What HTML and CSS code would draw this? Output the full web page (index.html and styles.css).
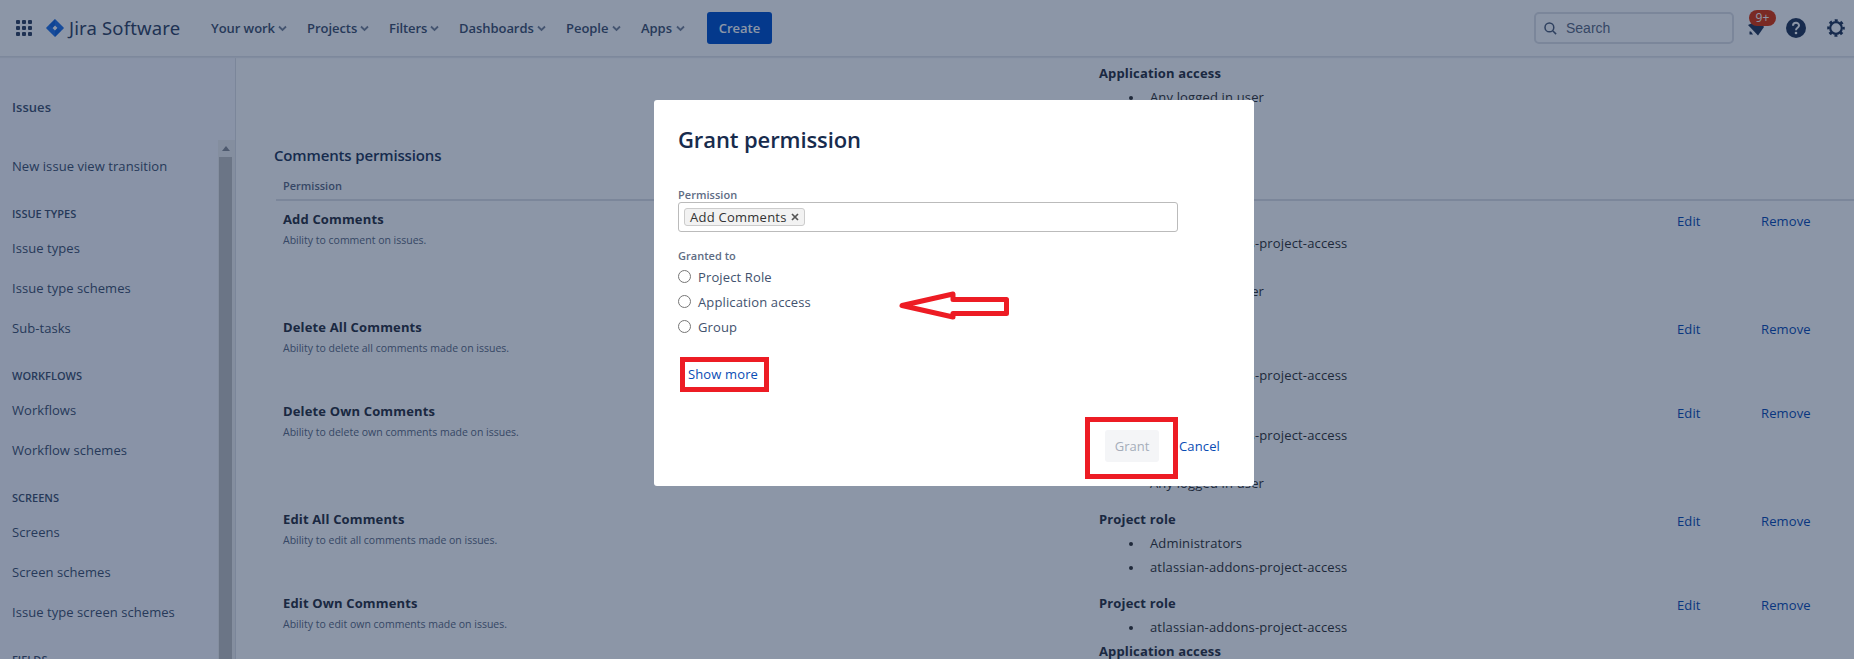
FILE: index.html
```html
<!DOCTYPE html>
<html lang="en">
<head>
    <meta charset="UTF-8">
    <meta name="viewport" content="width=device-width, initial-scale=1.0">
    <link rel="stylesheet" href="styles.css">
    <title>Grant permission - Jira</title>
</head>
<body>
    <header class="topbar">
        <svg class="switcher" width="16" height="16" viewBox="0 0 16 16">
            <g fill="#344563">
                <rect x="0" y="0" width="4" height="4" rx="1"/><rect x="6" y="0" width="4" height="4" rx="1"/><rect x="12" y="0" width="4" height="4" rx="1"/>
                <rect x="0" y="6" width="4" height="4" rx="1"/><rect x="6" y="6" width="4" height="4" rx="1"/><rect x="12" y="6" width="4" height="4" rx="1"/>
                <rect x="0" y="12" width="4" height="4" rx="1"/><rect x="6" y="12" width="4" height="4" rx="1"/><rect x="12" y="12" width="4" height="4" rx="1"/>
            </g>
        </svg>
        <div class="logo">
            <svg width="18" height="18" viewBox="0 0 18 18">
                <path fill="#2272e8" fill-rule="evenodd" d="M9 0l8.600 8.500q.5.5 0 1L9 18 .4 9.500q-.5-.5 0-1zM9 6.500L6.500 9 9 11.500 11.500 9z"/>
                <path fill="#0052cc" d="M9 0v6.500L6.500 9 3.200 6zM9 18v-6.500L11.500 9l3.300 3z" opacity=".4"/>
            </svg>
            <span class="logo-name">Jira Software</span>
        </div>
        <nav class="nav">
            <span class="nav-item n1">Your work<svg width="9" height="7" viewBox="0 0 9 7"><path d="M1 1.500l3.500 3.500L8 1.500"/></svg></span>
            <span class="nav-item n2">Projects<svg width="9" height="7" viewBox="0 0 9 7"><path d="M1 1.500l3.500 3.500L8 1.500"/></svg></span>
            <span class="nav-item n3">Filters<svg width="9" height="7" viewBox="0 0 9 7"><path d="M1 1.500l3.500 3.500L8 1.500"/></svg></span>
            <span class="nav-item n4">Dashboards<svg width="9" height="7" viewBox="0 0 9 7"><path d="M1 1.500l3.500 3.500L8 1.500"/></svg></span>
            <span class="nav-item n5">People<svg width="9" height="7" viewBox="0 0 9 7"><path d="M1 1.500l3.500 3.500L8 1.500"/></svg></span>
            <span class="nav-item n6">Apps<svg width="9" height="7" viewBox="0 0 9 7"><path d="M1 1.500l3.500 3.500L8 1.500"/></svg></span>
        </nav>
        <button class="create">Create</button>
        <div class="tools">
            <div class="search">
                <svg width="13" height="13" viewBox="0 0 13 13" fill="none" stroke="#505f79" stroke-width="1.5"><circle cx="5.4" cy="5.4" r="4.4"/><path d="M8.7 8.7l3.4 3.4"/></svg>
                <span>Search</span>
            </div>
            <div class="bell">
                <svg width="18" height="18" viewBox="0 0 18 18" fill="#253858"><path d="M1 6L12 1l5 7-6 8.500z"/><path d="M2.500 12.500h1.500l2 3H3q-.5 0-.5-.5z"/></svg>
                <span class="badge">9+</span>
            </div>
            <svg class="help" width="20" height="20" viewBox="0 0 20 20"><circle cx="10" cy="10" r="10" fill="#253858"/><path d="M7 7.800C7 3.800 13 3.900 13 7.500c0 2.300-3 2.200-3 4.700" fill="none" stroke="#fff" stroke-width="2"/><circle cx="10" cy="15" r="1.300" fill="#fff"/></svg>
            <svg class="gear" width="18" height="18" viewBox="0 0 18 18" fill="none" stroke="#253858"><circle cx="9" cy="9" r="5.800" stroke-width="2.200"/><circle cx="9" cy="9" r="7.600" stroke-width="2.400" stroke-dasharray="2.985 2.985" stroke-dashoffset="1.490"/></svg>
        </div>
    </header>

    <div class="page">
        <aside class="sidebar">
            <div class="side-title">Issues</div>
            <div class="side-body">
                <div class="side-list">
                    <a class="side-link">New issue view transition</a>
                    <h4 class="side-head">ISSUE TYPES</h4>
                    <a class="side-link">Issue types</a>
                    <a class="side-link">Issue type schemes</a>
                    <a class="side-link">Sub-tasks</a>
                    <h4 class="side-head">WORKFLOWS</h4>
                    <a class="side-link">Workflows</a>
                    <a class="side-link">Workflow schemes</a>
                    <h4 class="side-head">SCREENS</h4>
                    <a class="side-link">Screens</a>
                    <a class="side-link">Screen schemes</a>
                    <a class="side-link">Issue type screen schemes</a>
                    <h4 class="side-head">FIELDS</h4>
                </div>
                <div class="scrollbar"><div class="scroll-up"></div><div class="scroll-thumb"></div></div>
            </div>
        </aside>

        <main class="content">
            <div class="row row-prev">
                <div class="perm"></div>
                <div class="grants">
                    <b>Project role</b>
                    <ul><li>atlassian-addons-project-access</li></ul>
                    <b>Application access</b>
                    <ul><li>Any logged in user</li></ul>
                </div>
            </div>

            <h3 class="section-title">Comments permissions</h3>
            <div class="table-head">Permission</div>

            <div class="row">
                <div class="perm"><b>Add Comments</b><p>Ability to comment on issues.</p></div>
                <div class="grants">
                    <b>Project role</b>
                    <ul><li>atlassian-addons-project-access</li></ul>
                    <b>Application access</b>
                    <ul><li>Any logged in user</li></ul>
                </div>
                <a class="action">Edit</a><a class="action">Remove</a>
            </div>
            <div class="row">
                <div class="perm"><b>Delete All Comments</b><p>Ability to delete all comments made on issues.</p></div>
                <div class="grants">
                    <b>Project role</b>
                    <ul><li>Administrators</li><li>atlassian-addons-project-access</li></ul>
                </div>
                <a class="action">Edit</a><a class="action">Remove</a>
            </div>
            <div class="row">
                <div class="perm"><b>Delete Own Comments</b><p>Ability to delete own comments made on issues.</p></div>
                <div class="grants">
                    <b>Project role</b>
                    <ul><li>atlassian-addons-project-access</li></ul>
                    <b>Application access</b>
                    <ul><li>Any logged in user</li></ul>
                </div>
                <a class="action">Edit</a><a class="action">Remove</a>
            </div>
            <div class="row">
                <div class="perm"><b>Edit All Comments</b><p>Ability to edit all comments made on issues.</p></div>
                <div class="grants">
                    <b>Project role</b>
                    <ul><li>Administrators</li><li>atlassian-addons-project-access</li></ul>
                </div>
                <a class="action">Edit</a><a class="action">Remove</a>
            </div>
            <div class="row">
                <div class="perm"><b>Edit Own Comments</b><p>Ability to edit own comments made on issues.</p></div>
                <div class="grants">
                    <b>Project role</b>
                    <ul><li>atlassian-addons-project-access</li></ul>
                    <b>Application access</b>
                </div>
                <a class="action">Edit</a><a class="action">Remove</a>
            </div>
        </main>
    </div>

    <div class="blanket">
        <div class="dialog">
            <h2 class="dialog-title">Grant permission</h2>
            <div class="label">Permission</div>
            <div class="field">
                <span class="tag">Add Comments<svg width="8" height="8" viewBox="0 0 8 8"><path d="M1 1l6 6M7 1L1 7"/></svg></span>
            </div>
            <div class="label label-granted">Granted to</div>
            <label class="radio"><input type="radio" name="grant">Project Role</label>
            <label class="radio"><input type="radio" name="grant">Application access</label>
            <label class="radio"><input type="radio" name="grant">Group</label>
            <a class="show-more">Show more</a>
            <div class="buttons">
                <div class="mark"><button class="grant" disabled>Grant</button></div>
                <a class="cancel">Cancel</a>
            </div>
            <svg class="arrow" width="112" height="30" viewBox="0 0 112 30"><path d="M4 15.500L55 4v5.500h53.500v14H55V27z" fill="none" stroke="#ed1c24" stroke-width="5" stroke-linejoin="round"/></svg>
        </div>
    </div>
</body>
</html>
```
FILE: styles.css
```css
* {
    box-sizing: border-box;
}

body {
    margin: 0;
    height: 659px;
    overflow: hidden;
    background: #fff;
    color: #333;
    font-family: "Open Sans", "Noto Sans", sans-serif;
    font-size: 13px;
    letter-spacing: 0.13px;
}

h2, h3, h4, p, ul {
    margin: 0;
    padding: 0;
}

.topbar {
    position: relative;
    z-index: 1;
    display: flex;
    align-items: center;
    height: 56px;
    padding: 0 9px 0 16px;
    background: #fff;
    box-shadow: 0 1px 0 #e3e5ea, 0 2px 1px #ebecf0;
}

.logo {
    display: flex;
    align-items: center;
    width: 165px;
    margin-left: 14px;
    gap: 5px;
}

.logo-name {
    color: #344563;
    font-family: "Noto Sans", sans-serif;
    font-size: 18.5px;
    letter-spacing: 0.15px;
    line-height: 24px;
    padding-bottom: 1px;
    white-space: nowrap;
}

.nav {
    display: flex;
    width: 496px;
}

.nav-item {
    display: flex;
    align-items: center;
    justify-content: space-between;
    margin-right: 20px;
    color: #42526e;
    font-weight: 600;
    letter-spacing: -0.05px;
    white-space: nowrap;
}

.nav-item svg {
    fill: none;
    stroke: #7a869a;
    stroke-width: 1.8;
}

.n1 { width: 76px; }
.n2 { width: 62px; }
.n3 { width: 50px; }
.n4 { width: 87px; }
.n5 { width: 55px; }
.n6 { width: 44px; }

.create {
    width: 65px;
    height: 32px;
    padding: 0;
    border: 0;
    border-radius: 3px;
    background: #0052cc;
    color: #fff;
    font: 600 13px "Open Sans", sans-serif;
}

.tools {
    display: flex;
    align-items: center;
    margin-left: auto;
}

.search {
    display: flex;
    align-items: center;
    width: 200px;
    height: 32px;
    padding-left: 8px;
    gap: 9px;
    border: 2px solid #dfe1e6;
    border-radius: 5px;
    color: #5e6c84;
    font: 14px "Liberation Sans", sans-serif;
    letter-spacing: 0;
}

.bell {
    position: relative;
    width: 18px;
    height: 18px;
    margin-left: 13px;
}

.badge {
    position: absolute;
    top: -9px;
    left: 2px;
    width: 27px;
    height: 16px;
    border-radius: 8px;
    background: #de350b;
    color: #fff;
    font-size: 12px;
    line-height: 16px;
    text-align: center;
}

.help {
    margin-left: 21px;
}

.gear {
    margin-left: 21px;
}

.page {
    display: flex;
    height: 603px;
}

.sidebar {
    display: flex;
    flex-direction: column;
    width: 236px;
    border-right: 1px solid #dfe1e6;
    background: #f9faff;
    color: #42526e;
    letter-spacing: 0.06px;
}

.side-title {
    height: 84px;
    padding: 41px 0 0 12px;
    font-weight: 600;
    line-height: 20px;
}

.side-body {
    display: flex;
    flex: 1;
    min-height: 0;
    overflow: hidden;
}

.side-list {
    width: 218px;
    padding: 6px 0 0 12px;
}

.side-link {
    display: block;
    height: 40px;
    line-height: 40px;
}

.side-head {
    height: 42px;
    padding-top: 20px;
    color: #42526e;
    font-size: 11px;
    font-weight: 600;
    letter-spacing: 0;
    line-height: 16px;
}

.scrollbar {
    width: 17px;
    padding: 6px 3px 0 1px;
    background: #f1f1f1;
}

.scroll-up {
    width: 0;
    margin: 0 auto 6px;
    border: 4px solid transparent;
    border-top: 0;
    border-bottom: 5px solid #8b8f96;
}

.scroll-thumb {
    height: 560px;
    background: #c1c1c1;
}

.content {
    flex: 1;
    height: 603px;
    padding-left: 38px;
    overflow: hidden;
}

.section-title {
    height: 59px;
    padding-top: 28px;
    color: #253858;
    font-size: 15px;
    font-weight: 600;
    letter-spacing: -0.15px;
    line-height: 24px;
}

.table-head {
    height: 27px;
    margin-left: 2px;
    padding-left: 7px;
    border-bottom: 2px solid #dfe1e6;
    color: #5e6c84;
    font-size: 11px;
    font-weight: 600;
    letter-spacing: 0;
    line-height: 23px;
}

.row {
    display: grid;
    grid-template-columns: 816px 578px 84px 1fr;
    align-items: start;
    margin-left: 2px;
    padding: 6px 0 6px 7px;
}

.row-prev {
    margin-top: -49px;
}

.row b {
    display: block;
    color: #2b3140;
    letter-spacing: 0.15px;
    line-height: 24px;
}

.perm p {
    color: #5e6c84;
    font-size: 10.5px;
    letter-spacing: 0;
    line-height: 18px;
}

.grants ul {
    padding-left: 29px;
    list-style: none;
}

.grants li {
    line-height: 24px;
    letter-spacing: 0.15px;
}

.grants li::before {
    content: "";
    display: inline-block;
    width: 4px;
    height: 4px;
    margin: 0 17px 2px 1px;
    border-radius: 50%;
    background: #333;
}

.action {
    color: #0a4cb4;
    line-height: 28px;
}

.blanket {
    position: absolute;
    z-index: 2;
    inset: 0;
    background: rgba(9, 30, 66, 0.467);
}

.dialog {
    position: relative;
    width: 600px;
    height: 386px;
    margin: 100px 0 0 654px;
    padding: 23px 24px;
    border-radius: 3px;
    background: #fff;
}

.dialog-title {
    color: #172b4d;
    font-size: 22px;
    font-weight: 600;
    letter-spacing: -0.1px;
    line-height: 32px;
}

.label {
    margin-top: 32px;
    color: #5e6c84;
    font-size: 11px;
    font-weight: 600;
    letter-spacing: 0.03px;
    line-height: 15px;
}

.field {
    display: flex;
    align-items: center;
    width: 500px;
    height: 30px;
    padding-left: 5px;
    border: 1px solid #bbb;
    border-radius: 3px;
}

.tag {
    display: flex;
    align-items: center;
    justify-content: space-between;
    width: 121px;
    height: 18px;
    padding: 0 5px;
    border: 1px solid #ccc;
    border-radius: 3px;
    background: #f2f2f2;
    letter-spacing: 0.25px;
    line-height: 16px;
}

.tag svg {
    fill: none;
    stroke: #555;
    stroke-width: 1.7;
}

.label-granted {
    margin: 16px 0 1px;
}

.radio {
    display: flex;
    align-items: center;
    height: 25px;
    gap: 7px;
    color: #42526e;
}

.radio input {
    width: 13px;
    height: 13px;
    margin: 0;
}

.show-more {
    display: block;
    width: 89px;
    height: 35px;
    margin: 18px 0 0 2px;
    padding-left: 3px;
    border: 5px solid #ed1c24;
    color: #0a4cb4;
    line-height: 24px;
}

.buttons {
    display: flex;
    margin: 25px 0 0 407px;
}

.mark {
    width: 93px;
    height: 62px;
    padding: 8px 0 0 15px;
    border: 5px solid #ed1c24;
}

.grant {
    width: 54px;
    height: 32px;
    padding: 0;
    border: 0;
    border-radius: 3px;
    background: #f4f5f7;
    color: #a5adba;
    font: 13px "Open Sans", sans-serif;
}

.cancel {
    margin-left: 1px;
    color: #0a4cb4;
    line-height: 59px;
}

/* hand-drawn pointer next to the options */
.arrow {
    position: absolute;
    top: 190px;
    left: 244px;
}
```
